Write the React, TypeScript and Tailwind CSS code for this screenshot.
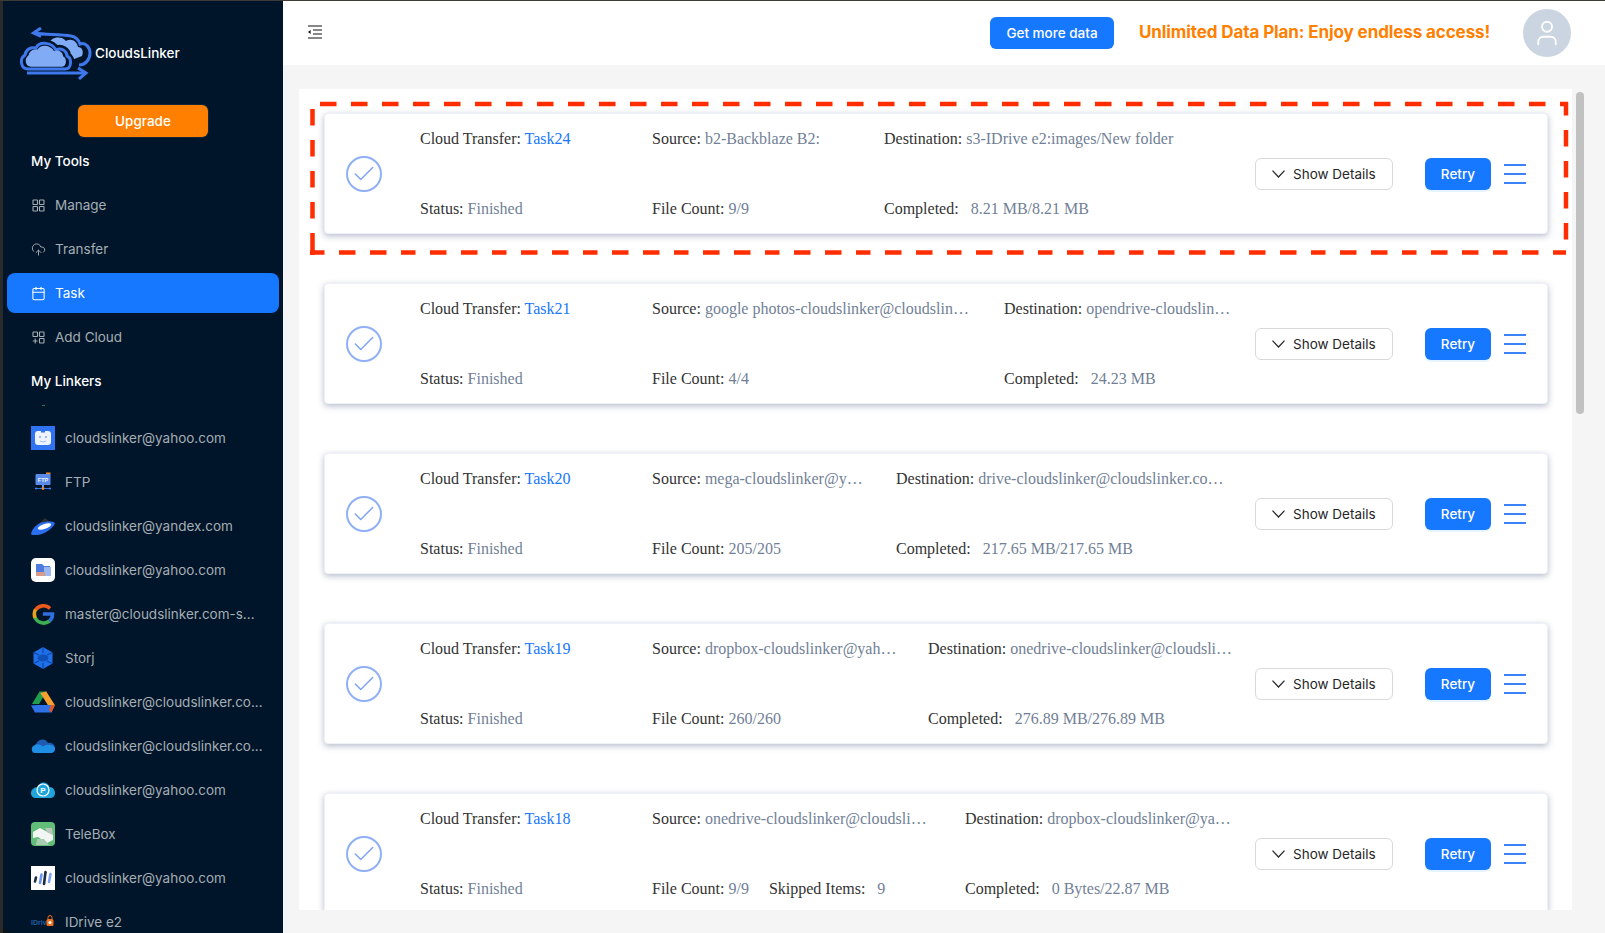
import React from "react";
import { Check, Calendar, CloudUpload, User } from "lucide-react";

const FONT_UI = "font-['Inter','Liberation_Sans',sans-serif]";
const FONT_SERIF = "font-['Liberation_Serif','Times_New_Roman',serif]";

const CLOUD = "M9 42 C2 42 0 32 6 28 C7 22 12 20 17 21 C20 14 33 15 37 23 C42 20 48 24 48 29 C53 31 53 42 46 42 Z";

function Logo() {
  return (
    <svg width="73" height="53" viewBox="0 0 73 53" fill="none" className="shrink-0">
      <path d="M29 18 C31 10 42 8 47 14 C52 11 58 14 59 20 C63 20 65 24 63 29 L50 34 Z" fill="#82abf5" />
      <path d="M15 6 C28 8 40 7 52 9 C58 10 60 14 61 17 C67 15 71 21 71 26 C71 33 66 38 60 38" stroke="#3f78ec" strokeWidth="3" />
      <path d="M22 1 L14.5 6 L22 9.5" stroke="#3f78ec" strokeWidth="3" />
      <path d={CLOUD} stroke="#001529" strokeWidth="8" fill="#001529" />
      <path d={CLOUD} stroke="#3f78ec" strokeWidth="3" fill="#001529" />
      <path d={CLOUD} fill="#82abf5" transform="translate(4.7 5.4) scale(.82)" />
      <path d="M8 46 H66" stroke="#3f78ec" strokeWidth="3" />
      <path d="M59 41 L67 46 L60 52" stroke="#3f78ec" strokeWidth="3" />
    </svg>
  );
}

function IconManage() {
  return (
    <svg width="13" height="13" viewBox="0 0 13 13" fill="none" stroke="#a6adb4" strokeWidth="1.1">
      <rect x="1" y="1" width="4.5" height="4.5" rx=".6" />
      <rect x="7.5" y="1" width="4.5" height="4.5" rx=".6" />
      <rect x="1" y="7.5" width="4.5" height="4.5" rx=".6" />
      <rect x="7.5" y="7.5" width="4.5" height="4.5" rx=".6" />
    </svg>
  );
}

function IconAddCloud() {
  return (
    <svg width="13" height="13" viewBox="0 0 13 13" fill="none" stroke="#a6adb4" strokeWidth="1.1">
      <rect x="1" y="1" width="4.5" height="4.5" rx=".4" />
      <rect x="7.5" y="1" width="4.5" height="4.5" rx=".4" />
      <rect x="7.5" y="7.5" width="4.5" height="4.5" rx=".4" />
      <path d="M3.2 7.4v5M.8 10h4.8" />
    </svg>
  );
}

const Ico = ({ children }: { children: React.ReactNode }) => (
  <svg width="24" height="24" viewBox="0 0 24 24" className="shrink-0">
    {children}
  </svg>
);

const linkers: { name: string; icon: React.ReactNode }[] = [
  {
    name: "cloudslinker@yahoo.com",
    icon: (
      <Ico>
        <rect width="24" height="24" fill="#2f72f2" />
        <rect x="4" y="5" width="16" height="14" rx="3" fill="#eef3fe" />
        <rect x="10" y="3.5" width="4" height="3" fill="#2f72f2" />
        <circle cx="9" cy="11" r="1" fill="#7ea5f3" />
        <circle cx="15" cy="11" r="1" fill="#7ea5f3" />
        <path d="M9 15q3 2 6 0" stroke="#9dbcf6" strokeWidth="1" fill="none" />
      </Ico>
    ),
  },
  {
    name: "FTP",
    icon: (
      <Ico>
        <path d="M15 2.5h4.5v2H15z" fill="#f08a2c" />
        <rect x="4.5" y="4" width="15" height="11" rx="1" fill="#5a8be8" />
        <text x="12" y="11.5" fontSize="5.5" fontWeight="700" fill="#eaf1ff" textAnchor="middle" fontFamily="Liberation Sans">FTP</text>
        <rect x="11" y="15" width="2" height="4" fill="#6b9bec" />
        <path d="M4 18.5h16" stroke="#2f72f2" strokeWidth="1" />
        <circle cx="5" cy="18.5" r="1" fill="#4b86ec" />
        <circle cx="19" cy="18.5" r="1" fill="#4b86ec" />
        <circle cx="12" cy="18.5" r="1.4" fill="#f08a2c" />
      </Ico>
    ),
  },
  {
    name: "cloudslinker@yandex.com",
    icon: (
      <Ico>
        <path d="M6 11 L14 4 L19 8 L14 10 Z" fill="#2a2f38" />
        <path d="M0 20 C1 14 8 8 14 8 C19 7 23 8 24 9 C23 13 14 21 5 21 C2 21 0 21 0 20Z" fill="#2a6ff0" />
        <ellipse cx="13.5" cy="12.5" rx="7" ry="2.4" transform="rotate(-18 13.5 12.5)" fill="#ffffff" />
      </Ico>
    ),
  },
  {
    name: "cloudslinker@yahoo.com",
    icon: (
      <Ico>
        <rect width="24" height="24" rx="5" fill="#ffffff" />
        <path d="M5 6h6l2 2h6v10H5z" fill="#4d7be0" />
        <rect x="13" y="9" width="7" height="9" fill="#9db8ef" />
        <rect x="5" y="14" width="9" height="4" fill="#d99a8a" />
      </Ico>
    ),
  },
  {
    name: "master@cloudslinker.com-s...",
    icon: (
      <Ico>
        <path d="M19 6.5 A9.5 9.5 0 0 0 4.5 8" stroke="#ea5a1c" strokeWidth="3.6" fill="none" />
        <path d="M4.5 7.5 A9.5 9.5 0 0 0 4.5 16.5" stroke="#e8a21c" strokeWidth="3.6" fill="none" />
        <path d="M4.2 16 A9.5 9.5 0 0 0 18.5 19" stroke="#3fae53" strokeWidth="3.6" fill="none" />
        <path d="M12 12h9.5c0 3-1 5.5-3 7" stroke="#2f6fe0" strokeWidth="3.6" fill="none" />
      </Ico>
    ),
  },
  {
    name: "Storj",
    icon: (
      <Ico>
        <path d="M12 1 L21.5 6.5 V17.5 L12 23 L2.5 17.5 V6.5 Z" fill="#1f6fe8" />
        <path d="M12 1V7M2.5 6.5L8 9M21.5 6.5L16 9M2.5 17.5L8 15M21.5 17.5L16 15M12 23V17" stroke="#0b3f9a" strokeWidth="1" />
        <ellipse cx="12" cy="12" rx="5.5" ry="3.5" fill="#0f4fb8" />
      </Ico>
    ),
  },
  {
    name: "cloudslinker@cloudslinker.co...",
    icon: (
      <Ico>
        <path d="M8 1.5 H15 L7.5 14 H0.5 Z" transform="translate(0.5 0)" fill="#1f9d4d" />
        <path d="M15.5 1.5 L24 15 H17 L9.5 3 Z" fill="#f6a12e" transform="translate(-.2 0)" />
        <path d="M6 15 H24 L20.5 22.5 H4 L0 15.5 Z" fill="#2f72e8" />
        <path d="M20 15 H24 L20.5 22.5 L18 20 Z" fill="#e2561f" />
      </Ico>
    ),
  },
  {
    name: "cloudslinker@cloudslinker.co...",
    icon: (
      <Ico>
        <path d="M5 11 C6 5 14 3 17 9 C21 8 24 11 24 14 H3 Z" fill="#1d5cb0" />
        <path d="M3 11.5 C6 9 10 11 12 12.5 C15 10 22 10 24 14 C24.5 17 22.5 19 20.5 19 H4 C1 19 -1 14 3 11.5Z" fill="#1f8fe6" />
      </Ico>
    ),
  },
  {
    name: "cloudslinker@yahoo.com",
    icon: (
      <Ico>
        <path d="M7 9 C8 3 17 3 18.5 9 C22 9 24 12 24 15 C24 18 22 20 19 20 H5 C2 20 0 18 0 15 C0 12 3 9 7 9Z" fill="#1fa5dc" />
        <circle cx="12" cy="12" r="6" fill="#1fa5dc" stroke="#ffffff" strokeWidth="1.2" />
        <text x="12" y="15" fontSize="8" fontWeight="700" fill="#ffffff" textAnchor="middle" fontFamily="Liberation Sans">P</text>
      </Ico>
    ),
  },
  {
    name: "TeleBox",
    icon: (
      <Ico>
        <rect width="24" height="24" rx="4" fill="#62bd78" />
        <path d="M2 10 L9 6 L22 13 V18 L16 21 L7 15 L2 16 Z" fill="#f2f5f3" />
        <path d="M14 6 L21 6 L22 13 L16 10 Z" fill="#b9c6bd" />
        <path d="M6 17 L13 17 L18 23 L5 23 Z" fill="#a9cdb2" />
      </Ico>
    ),
  },
  {
    name: "cloudslinker@yahoo.com",
    icon: (
      <Ico>
        <rect width="24" height="24" fill="#ffffff" />
        <path d="M4 15.5 L5 11.5" stroke="#1f2a44" strokeWidth="2.6" strokeLinecap="round" />
        <path d="M9 17 L10.5 8.5" stroke="#6b97ee" strokeWidth="2.6" strokeLinecap="round" />
        <path d="M13 18 L14.5 6" stroke="#1f2a44" strokeWidth="2.6" strokeLinecap="round" />
        <path d="M18 16 L19.5 8" stroke="#7ea5f3" strokeWidth="2.6" strokeLinecap="round" />
      </Ico>
    ),
  },
  {
    name: "IDrive e2",
    icon: (
      <Ico>
        <text x="0" y="15" fontSize="7" fontWeight="700" fill="#1f5ea8" fontFamily="Liberation Sans">IDriv</text>
        <rect x="15.5" y="9" width="7" height="7" rx="1.5" fill="#f0701f" />
        <path d="M17 9 V7.5 a2 2 0 0 1 4 0 V9" stroke="#f0701f" fill="none" strokeWidth="1" />
        <circle cx="19" cy="12.5" r="1.5" fill="#ffffff" />
      </Ico>
    ),
  },
];

type Task = {
  name: string;
  col2: string;
  source: string;
  dest: string;
  count: string;
  skipped?: string;
  done: string;
};

const tasks: Task[] = [
  { name: "Task24", col2: "w-[232px]", source: "b2-Backblaze B2:", dest: "s3-IDrive e2:images/New folder", count: "9/9", done: "8.21 MB/8.21 MB" },
  { name: "Task21", col2: "w-[352px]", source: "google photos-cloudslinker@cloudslin…", dest: "opendrive-cloudslin…", count: "4/4", done: "24.23 MB" },
  { name: "Task20", col2: "w-[244px]", source: "mega-cloudslinker@y…", dest: "drive-cloudslinker@cloudslinker.co…", count: "205/205", done: "217.65 MB/217.65 MB" },
  { name: "Task19", col2: "w-[276px]", source: "dropbox-cloudslinker@yah…", dest: "onedrive-cloudslinker@cloudsli…", count: "260/260", done: "276.89 MB/276.89 MB" },
  { name: "Task18", col2: "w-[313px]", source: "onedrive-cloudslinker@cloudsli…", dest: "dropbox-cloudslinker@ya…", count: "9/9", skipped: "9", done: "0 Bytes/22.87 MB" },
];

const Val = ({ children, className = "" }: { children: React.ReactNode; className?: string }) => (
  <span className={`text-[#718096] ${className}`}>{children}</span>
);

function TaskCard({ t }: { t: Task }) {
  return (
    <div className="flex h-[121px] w-[1224px] shrink-0 items-center rounded-[4px] border border-[#eef0fa] bg-white pl-[21px] pr-[21px] shadow-[0_2px_6px_rgba(90,105,140,0.45)]">
      <div className="flex h-[36px] w-[36px] shrink-0 items-center justify-center rounded-full border-2 border-[#8fb0f6]">
        <Check size={26} strokeWidth={1.4} className="shrink-0 text-[#7fa4f4]" />
      </div>
      <div className={`ml-[38px] flex h-full flex-1 justify-between pb-[12px] pt-[13px] text-[16px] leading-[24px] text-[#333333] ${FONT_SERIF}`}>
        <div className="flex flex-1 whitespace-nowrap">
          <div className="flex w-[232px] flex-col justify-between">
            <div>
              Cloud Transfer: <span className="text-[#1677ff]">{t.name}</span>
            </div>
            <div>
              Status: <Val>Finished</Val>
            </div>
          </div>
          <div className={`flex flex-col justify-between ${t.col2}`}>
            <div>
              Source: <Val>{t.source}</Val>
            </div>
            <div className="flex">
              <span>
                File Count: <Val>{t.count}</Val>
              </span>
              {t.skipped && (
                <span className="ml-[20px]">
                  Skipped Items: <Val className="ml-[8px]">{t.skipped}</Val>
                </span>
              )}
            </div>
          </div>
          <div className="flex flex-col justify-between">
            <div>
              Destination: <Val>{t.dest}</Val>
            </div>
            <div>
              Completed: <Val className="ml-[8px]">{t.done}</Val>
            </div>
          </div>
        </div>
      </div>
      <div className={`flex shrink-0 items-center ${FONT_UI} text-[13.5px]`}>
        <div className="flex h-[32px] w-[138px] items-center gap-[8px] rounded-[6px] border border-[#d9d9d9] bg-white pl-[16px] text-[#262626]">
          <svg width="13" height="8" viewBox="0 0 13 8" fill="none" stroke="#262626" strokeWidth="1.2" className="shrink-0">
            <path d="M.5 .6 L6.5 7 L12.5 .6" />
          </svg>
          <span className="pt-[1px]">Show Details</span>
        </div>
        <div className="ml-[32px] flex h-[32px] w-[66px] items-center justify-center rounded-[6px] bg-[#1677ff] pt-[1px] font-medium text-white shadow-[0_2px_0_rgba(5,145,255,0.1)]">
          Retry
        </div>
        <div className="ml-[13px] flex h-[20px] w-[22px] flex-col justify-between">
          <span className="h-[2px] bg-[#3b82f6]" />
          <span className="h-[2px] bg-[#3b82f6]" />
          <span className="h-[2px] bg-[#3b82f6]" />
        </div>
      </div>
    </div>
  );
}

function MenuItem({ icon, label, active }: { icon: React.ReactNode; label: string; active?: boolean }) {
  return (
    <div className={`mx-[4px] mb-[4px] flex h-[40px] shrink-0 items-center gap-[10px] rounded-[8px] pl-[25px] ${active ? "bg-[#1677ff] text-white" : "text-[#a6adb4]"}`}>
      <span className="flex w-[13px] shrink-0 justify-center">{icon}</span>
      <span>{label}</span>
    </div>
  );
}

const SectionTitle = ({ children }: { children: React.ReactNode }) => (
  <div className="mx-[4px] mb-[4px] flex h-[40px] shrink-0 items-center pl-[24px] font-medium text-white">{children}</div>
);

export default function App() {
  return (
    <div className={`flex h-screen w-full flex-col overflow-hidden bg-[#111] ${FONT_UI}`}>
      <div className="h-[1px] shrink-0 bg-[#3d3a38]" />
      <div className="flex min-h-0 flex-1">
        <div className="w-[3px] shrink-0 bg-[#2a2a2a]" />
        <aside className="flex w-[280px] shrink-0 flex-col overflow-hidden rounded-bl-[8px] bg-[#001529] text-[13.5px]">
          <div className="flex shrink-0 items-end pl-[16px] pt-[26px]">
            <Logo />
            <span className="mb-[17px] ml-[3px] font-medium text-white">CloudsLinker</span>
          </div>
          <div className="ml-[75px] mt-[25px] flex h-[32px] w-[130px] shrink-0 items-center justify-center rounded-[6px] bg-[#ff8000] font-medium text-white shadow-[0_0_0_1px_rgba(255,255,255,0.08)]">
            Upgrade
          </div>
          <div className="mt-[4px] shrink-0">
            <SectionTitle>My Tools</SectionTitle>
            <MenuItem icon={<IconManage />} label="Manage" />
            <MenuItem icon={<CloudUpload size={15} strokeWidth={1.5} className="shrink-0" />} label="Transfer" />
            <MenuItem active icon={<Calendar size={15} strokeWidth={1.7} className="shrink-0" />} label="Task" />
            <MenuItem icon={<IconAddCloud />} label="Add Cloud" />
            <SectionTitle>My Linkers</SectionTitle>
          </div>
          <div className="mb-[12px] ml-[39px] h-px w-[3px] shrink-0 bg-[#1f7a50]" />
          {linkers.map((l, i) => (
            <div key={i} className="mx-[4px] mb-[4px] flex h-[40px] shrink-0 items-center gap-[10px] pl-[24px] text-[#a6adb4]">
              {l.icon}
              <span className="whitespace-nowrap">{l.name}</span>
            </div>
          ))}
        </aside>
        <main className="relative flex min-w-0 flex-1 flex-col bg-[#f5f5f5]">
          <header className="flex h-[64px] shrink-0 items-center bg-white pl-[25px] pr-[34px]">
            <svg width="14" height="14" viewBox="0 0 14 14" fill="none" stroke="#111" strokeWidth="1.2" className="mb-[2px]">
              <path d="M0 1h14M5 5h9M5 9h9M0 13h14" />
              <path d="M0 7l2.6-2v4z" fill="#111" stroke="none" />
            </svg>
            <div className="flex-1" />
            <div className="flex h-[32px] w-[124px] items-center justify-center rounded-[6px] bg-[#1677ff] text-[13.5px] font-medium text-white">
              Get more data
            </div>
            <div className="ml-[25px] w-[358px] whitespace-nowrap text-[17px] font-bold tracking-[-0.1px] text-[#ff8000]">Unlimited Data Plan: Enjoy endless access!</div>
            <div className="ml-[26px] flex h-[48px] w-[48px] items-center justify-center rounded-full bg-[#cbd5e1]">
              <User size={30} strokeWidth={1.5} className="text-white" />
            </div>
          </header>
          <div className="flex min-h-0 flex-1 pb-[23px] pl-[16px] pt-[24px]">
            <div className="flex flex-1 flex-col gap-[49px] overflow-hidden bg-white pl-[25px] pt-[24px]">
              {tasks.map((t) => (
                <TaskCard key={t.name} t={t} />
              ))}
            </div>
            <div className="w-[14px] shrink-0 bg-[#f5f5f5] pl-[4px] pt-[3px]">
              <div className="h-[322px] w-[8px] rounded-full bg-[#c1c1c1]" />
            </div>
            <div className="w-[19px] shrink-0" />
          </div>
          {/* annotation drawn over the first card */}
          <svg className="pointer-events-none absolute left-[27px] top-[100px]" width="1262" height="156" fill="none" stroke="#ff2d00" strokeWidth="4.5">
            <path d="M10 3 H1258" strokeDasharray="16.5 14.5" />
            <path d="M2.5 8 V132" strokeDasharray="16.5 14.5" />
            <path d="M2.5 132 V154" />
            <path d="M0 151.5 H1256" strokeDasharray="14.5 14.5 16.5 14.5 16.5 14.5" />
            <path d="M1256 1 V151.5" strokeDasharray="16.5 14.5" strokeDashoffset="3" />
          </svg>
        </main>
      </div>
    </div>
  );
}
